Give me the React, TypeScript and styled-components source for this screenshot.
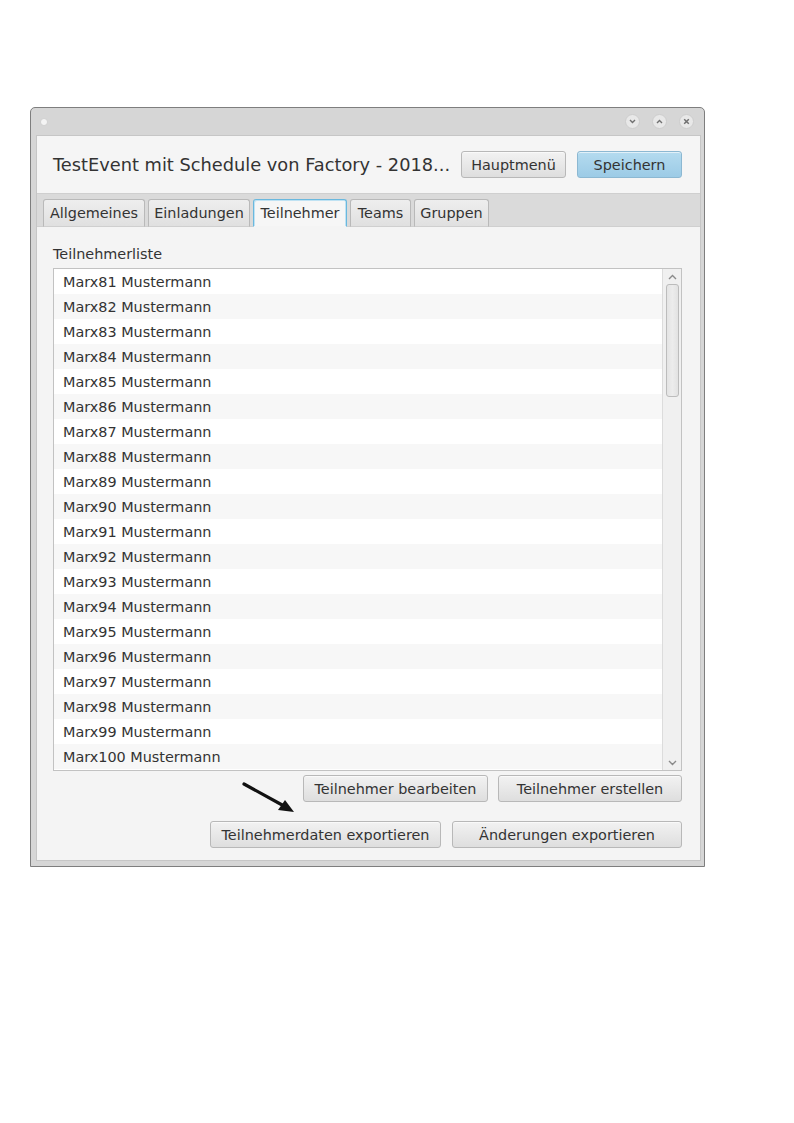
import React from "react";
import styled, { createGlobalStyle } from "styled-components";

const Global = createGlobalStyle`
  html, body { margin: 0; padding: 0; background: #ffffff; }
  body { font-family: "DejaVu Sans", "Liberation Sans", sans-serif; }
`;

const Page = styled.div`
  padding: 107px 0 0 30px;
  position: relative;
`;

const Window = styled.div`
  position: relative;
  width: 665px;
  border: 1px solid #7e7e7e;
  border-radius: 5px 5px 0 0;
  background: #d6d6d6;
  padding: 0 3px 5px 5px;
  box-sizing: content-box;
`;

const TitleBar = styled.div`
  height: 27px;
  display: flex;
  align-items: center;
  justify-content: space-between;
  padding: 0 0 0 5px;
  margin-right: -3px;
`;

const Dot = styled.div`
  width: 6px;
  height: 6px;
  border-radius: 50%;
  background: #f4f4f4;
  box-shadow: 0 0 1px #bbb;
`;

const Controls = styled.div`
  display: flex;
  gap: 12px;
  padding-right: 10px;
`;

const Ctrl = styled.div`
  width: 15px;
  height: 15px;
  border-radius: 50%;
  background: #e8e8e8;
  border: 1px solid #cdcdcd;
  box-sizing: border-box;
  display: flex;
  align-items: center;
  justify-content: center;
`;

const Inner = styled.div`
  background: #f4f4f4;
  border: 1px solid #c6c6c6;
  display: flex;
  flex-direction: column;
`;

const Header = styled.div`
  height: 57px;
  display: flex;
  align-items: center;
  padding: 0 18px 0 16px;
  background: #f5f5f5;
`;

const Title = styled.div`
  flex: 1;
  font-size: 17.8px;
  color: #333;
  white-space: nowrap;
  padding-right: 6px;
`;

const HeaderButtons = styled.div`
  display: flex;
  gap: 11px;
`;

const Button = styled.button<{ $primary?: boolean; $w: number }>`
  width: ${(p) => p.$w}px;
  height: 27px;
  font-family: "DejaVu Sans", "Liberation Sans", sans-serif;
  font-size: 14.4px;
  color: #333;
  border-radius: 3px;
  border: 1px solid ${(p) => (p.$primary ? "#8cb8d2" : "#b8b8b8")};
  background: ${(p) =>
    p.$primary
      ? "linear-gradient(#b4dbef, #9ccbe6)"
      : "linear-gradient(#f2f2f2, #dedede)"};
  box-shadow: inset 0 1px 0 rgba(255,255,255,0.6);
  padding: 0;
  cursor: default;
`;

const TabBar = styled.div`
  height: 34px;
  background: #dadada;
  border-top: 1px solid #cfcfcf;
  border-bottom: 1px solid #cfcfcf;
  box-sizing: border-box;
  display: flex;
  align-items: flex-end;
  gap: 3px;
  padding-left: 6px;
`;

const Tab = styled.div<{ $active?: boolean; $w: number }>`
  width: ${(p) => p.$w}px;
  height: 28px;
  box-sizing: border-box;
  margin-bottom: -1px;
  display: flex;
  align-items: center;
  justify-content: center;
  font-size: 14.4px;
  color: #333;
  border-radius: 3px 3px 0 0;
  border: 1px solid ${(p) => (p.$active ? "#6ab8de" : "#b9b9b9")};
  border-bottom: ${(p) => (p.$active ? "1px solid #f4f4f4" : "1px solid #cfcfcf")};
  background: ${(p) =>
    p.$active ? "#f6f6f6" : "linear-gradient(#eeeeee, #e0e0e0)"};
  box-shadow: ${(p) => (p.$active ? "inset 1px 1px 0 #bfe2f3, inset -1px 0 0 #bfe2f3" : "none")};
`;

const Content = styled.div`
  padding: 14px 18px 12px 16px;
  display: flex;
  flex-direction: column;
`;

const Label = styled.div`
  font-size: 14.4px;
  color: #333;
  height: 27px;
  padding-top: 5px;
  box-sizing: border-box;
`;

const ListBox = styled.div`
  height: 503px;
  border: 1px solid #c2c2c2;
  box-sizing: border-box;
  background: #fff;
  display: flex;
`;

const Rows = styled.div`
  flex: 1;
  display: flex;
  flex-direction: column;
`;

const Row = styled.div<{ $odd: boolean }>`
  height: 25px;
  display: flex;
  align-items: center;
  padding-left: 9px;
  font-size: 14.4px;
  color: #333;
  background: ${(p) => (p.$odd ? "#f7f7f7" : "#ffffff")};
`;

const ScrollBar = styled.div`
  width: 18px;
  background: #f0f0f0;
  border-left: 1px solid #dcdcdc;
  display: flex;
  flex-direction: column;
  align-items: center;
`;

const ScrollArrow = styled.div`
  height: 15px;
  display: flex;
  align-items: center;
  justify-content: center;
`;

const Thumb = styled.div`
  width: 13px;
  height: 113px;
  box-sizing: border-box;
  border: 1px solid #bcbcbc;
  border-radius: 3px;
  background: linear-gradient(90deg, #e4e4e4, #ececec 50%, #e2e2e2);
`;

const Track = styled.div`
  flex: 1;
`;

const ButtonRow = styled.div<{ $mt: number; $gap: number }>`
  display: flex;
  justify-content: flex-end;
  gap: ${(p) => p.$gap}px;
  margin-top: ${(p) => p.$mt}px;
`;

const Arrow = styled.svg`
  position: absolute;
  left: 240px;
  top: 781px;
`;

const names = Array.from({ length: 20 }, (_, i) => `Marx${81 + i} Mustermann`);

const Chevron = ({ up }: { up?: boolean }) => (
  <svg width="9" height="6" viewBox="0 0 9 6">
    <path
      d={up ? "M1 5 L4.5 1.5 L8 5" : "M1 1 L4.5 4.5 L8 1"}
      stroke="#8a8a8a"
      strokeWidth="1.4"
      fill="none"
    />
  </svg>
);

export default function App() {
  return (
    <>
      <Global />
      <Page>
        <Window>
          <TitleBar>
            <Dot />
            <Controls>
              <Ctrl>
                <svg width="7" height="5" viewBox="0 0 7 5">
                  <path d="M1 1 L3.5 3.5 L6 1" stroke="#707070" strokeWidth="1.4" fill="none" />
                </svg>
              </Ctrl>
              <Ctrl>
                <svg width="7" height="5" viewBox="0 0 7 5">
                  <path d="M1 4 L3.5 1.5 L6 4" stroke="#707070" strokeWidth="1.4" fill="none" />
                </svg>
              </Ctrl>
              <Ctrl>
                <svg width="7" height="7" viewBox="0 0 7 7">
                  <path d="M1.2 1.2 L5.8 5.8 M5.8 1.2 L1.2 5.8" stroke="#707070" strokeWidth="1.5" fill="none" />
                </svg>
              </Ctrl>
            </Controls>
          </TitleBar>
          <Inner>
            <Header>
              <Title>TestEvent mit Schedule von Factory - 2018...</Title>
              <HeaderButtons>
                <Button $w={105}>Hauptmenü</Button>
                <Button $w={105} $primary>Speichern</Button>
              </HeaderButtons>
            </Header>
            <TabBar>
              <Tab $w={102}>Allgemeines</Tab>
              <Tab $w={102}>Einladungen</Tab>
              <Tab $w={94} $active>Teilnehmer</Tab>
              <Tab $w={61}>Teams</Tab>
              <Tab $w={75}>Gruppen</Tab>
            </TabBar>
            <Content>
              <Label>Teilnehmerliste</Label>
              <ListBox>
                <Rows>
                  {names.map((n, i) => (
                    <Row key={n} $odd={i % 2 === 1}>
                      {n}
                    </Row>
                  ))}
                </Rows>
                <ScrollBar>
                  <ScrollArrow>
                    <Chevron up />
                  </ScrollArrow>
                  <Thumb />
                  <Track />
                  <ScrollArrow>
                    <Chevron />
                  </ScrollArrow>
                </ScrollBar>
              </ListBox>
              <ButtonRow $mt={4} $gap={10}>
                <Button $w={185}>Teilnehmer bearbeiten</Button>
                <Button $w={184}>Teilnehmer erstellen</Button>
              </ButtonRow>
              <ButtonRow $mt={19} $gap={11}>
                <Button $w={231}>Teilnehmerdaten exportieren</Button>
                <Button $w={230}>Änderungen exportieren</Button>
              </ButtonRow>
            </Content>
          </Inner>
        </Window>
        <Arrow width="60" height="36" viewBox="0 0 60 36">
          <path d="M4 3 L44 25" stroke="#111" strokeWidth="3.2" strokeLinecap="round" />
          <path d="M54 31 L38 29 L45 19 Z" fill="#111" />
        </Arrow>
      </Page>
    </>
  );
}
